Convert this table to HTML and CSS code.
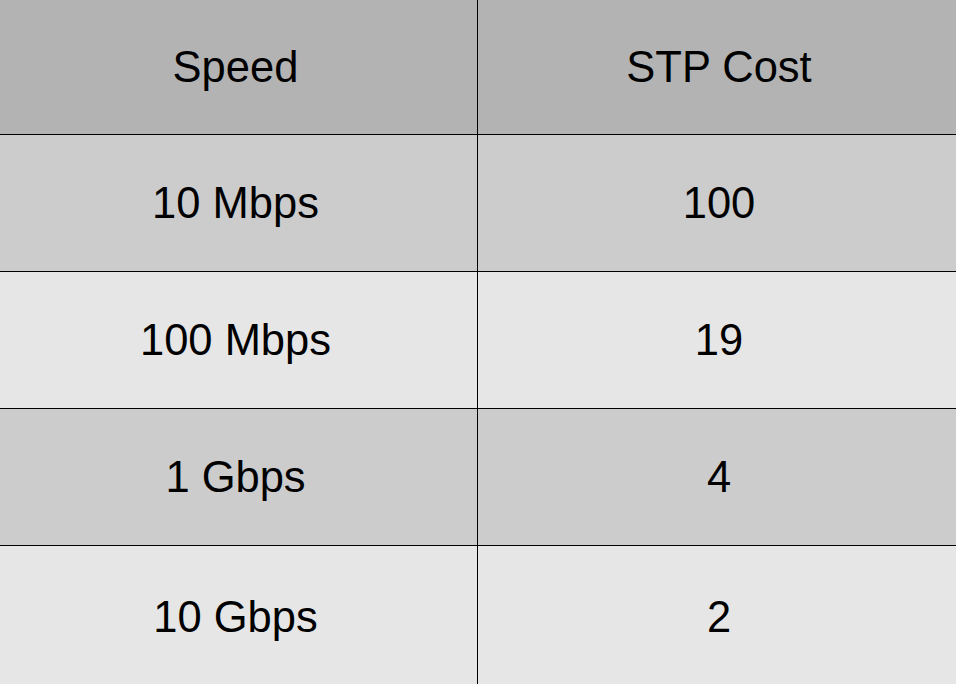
FILE: index.html
```html
<!DOCTYPE html>
<html>
<head>
<meta charset="utf-8">
<link rel="stylesheet" href="styles.css">
</head>
<body>
<div class="table">
  <div class="cell head left">Speed</div>
  <div class="cell head right">STP Cost</div>
  <div class="cell dark left">10 Mbps</div>
  <div class="cell dark right">100</div>
  <div class="cell light left">100 Mbps</div>
  <div class="cell light right">19</div>
  <div class="cell dark left">1 Gbps</div>
  <div class="cell dark right">4</div>
  <div class="cell light left last">10 Gbps</div>
  <div class="cell light right last">2</div>
</div>
</body>
</html>
```
FILE: styles.css
```css
html, body {
  margin: 0;
  padding: 0;
  width: 956px;
  height: 684px;
  overflow: hidden;
}
.table {
  display: grid;
  grid-template-columns: 478px 478px;
  grid-template-rows: 135px 137px 137px 137px 138px;
  width: 956px;
  height: 684px;
  font-family: "Liberation Sans", Arial, sans-serif;
  font-size: 43.5px;
  color: #000;
}
.cell {
  display: flex;
  align-items: center;
  justify-content: center;
  border-bottom: 1px solid #000;
  box-sizing: border-box;
}
.left {
  border-right: 1px solid #000;
  padding-right: 6px;
}
.right {
  padding-left: 4px;
}
.last {
  border-bottom: none;
  padding-top: 4px;
}
.head { background: #b3b3b3; }
.dark { background: #cccccc; }
.light { background: #e6e6e6; }
```
